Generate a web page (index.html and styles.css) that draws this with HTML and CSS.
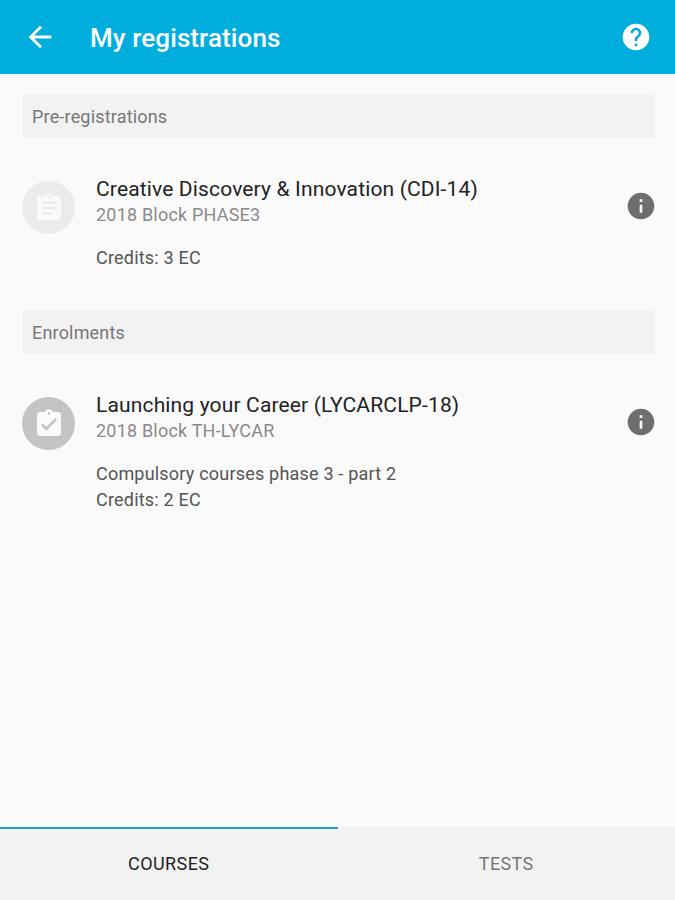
FILE: index.html
```html
<!DOCTYPE html>
<html>
<head>
  <title>My registrations</title>
  <link rel="stylesheet" href="styles.css">
</head>
<body>
  <div class="app">
    <header class="toolbar">
      <svg class="back-icon" viewBox="0 0 24 24"><path d="M20 11H7.83l5.59-5.59L12 4l-8 8 8 8 1.41-1.41L7.83 13H20v-2z"/></svg>
      <h1 class="toolbar-title">My registrations</h1>
      <svg class="help-icon" viewBox="0 0 24 24"><path d="M12 2C6.48 2 2 6.48 2 12s4.48 10 10 10 10-4.48 10-10S17.52 2 12 2zm1 17h-2v-2h2v2zm2.07-7.75l-.9.92C13.45 12.9 13 13.5 13 15h-2v-.5c0-1.1.45-2.1 1.17-2.83l1.24-1.26c.37-.36.59-.86.59-1.41 0-1.1-.9-2-2-2s-2 .9-2 2H8c0-2.21 1.79-4 4-4s4 1.79 4 4c0 .88-.36 1.68-.93 2.25z"/></svg>
    </header>

    <main class="content">
      <section class="group">
        <h2 class="group-title">Pre-registrations</h2>
        <div class="course">
          <div class="badge badge-pending">
            <svg viewBox="0 0 24 24"><path d="M19 3h-4.18C14.4 1.84 13.3 1 12 1s-2.4.84-2.82 2H5c-1.1 0-2 .9-2 2v14c0 1.1.9 2 2 2h14c1.1 0 2-.9 2-2V5c0-1.1-.9-2-2-2zm-7 0c.55 0 1 .45 1 1s-.45 1-1 1-1-.45-1-1 .45-1 1-1zm2 14H7v-2h7v2zm3-4H7v-2h10v2zm0-4H7V7h10v2z"/></svg>
          </div>
          <div class="course-body">
            <div class="course-name">Creative Discovery &amp; Innovation (CDI-14)</div>
            <div class="course-block">2018 Block PHASE3</div>
            <div class="course-info">Credits: 3 EC</div>
          </div>
          <svg class="info-icon" viewBox="0 0 24 24"><path d="M12 2C6.48 2 2 6.48 2 12s4.48 10 10 10 10-4.48 10-10S17.52 2 12 2zm1 15h-2v-6h2v6zm0-8h-2V7h2v2z"/></svg>
        </div>
      </section>

      <section class="group">
        <h2 class="group-title">Enrolments</h2>
        <div class="course">
          <div class="badge badge-enrolled">
            <svg viewBox="0 0 24 24"><path d="M19 3h-4.18C14.4 1.84 13.3 1 12 1s-2.4.84-2.82 2H5c-1.1 0-2 .9-2 2v14c0 1.1.9 2 2 2h14c1.1 0 2-.9 2-2V5c0-1.1-.9-2-2-2zm-7 0c.55 0 1 .45 1 1s-.45 1-1 1-1-.45-1-1 .45-1 1-1zm-2 14l-4-4 1.41-1.41L10 14.17l6.59-6.59L18 9l-8 8z"/></svg>
          </div>
          <div class="course-body">
            <div class="course-name">Launching your Career (LYCARCLP-18)</div>
            <div class="course-block">2018 Block TH-LYCAR</div>
            <div class="course-info">Compulsory courses phase 3 - part 2<br>Credits: 2 EC</div>
          </div>
          <svg class="info-icon" viewBox="0 0 24 24"><path d="M12 2C6.48 2 2 6.48 2 12s4.48 10 10 10 10-4.48 10-10S17.52 2 12 2zm1 15h-2v-6h2v6zm0-8h-2V7h2v2z"/></svg>
        </div>
      </section>
    </main>

    <nav class="tabs">
      <div class="tab tab-active">COURSES</div>
      <div class="tab">TESTS</div>
    </nav>
  </div>
</body>
</html>
```

FILE: styles.css
```css
body {
  margin: 0;
  font-family: Roboto, "Liberation Sans", sans-serif;
  background-color: #fafafa;
}

.app {
  display: flex;
  flex-direction: column;
  height: 900px;
}

.toolbar {
  display: flex;
  align-items: center;
  height: 74px;
  padding: 0 23px 0 23px;
  background-color: #00aede;
  color: #fff;
}

.back-icon {
  width: 34px;
  height: 34px;
  fill: #fff;
}

.toolbar-title {
  flex: 1;
  margin: 2px 0 0 33px;
  font-size: 26px;
  font-weight: 500;
  letter-spacing: 0.1px;
}

.help-icon {
  width: 32px;
  height: 32px;
  fill: #fff;
}

.content {
  flex: 1;
  padding: 21px 20px 0 22px;
}

.group {
  margin-bottom: 40px;
}

.group-title {
  margin: 0;
  height: 43px;
  padding-left: 10px;
  background-color: #f2f2f2;
  color: #777;
  font-size: 18px;
  font-weight: 400;
  letter-spacing: 0.18px;
  line-height: 43px;
}

.course {
  display: flex;
  align-items: flex-start;
  padding-top: 38px;
}

.badge {
  display: flex;
  align-items: center;
  justify-content: center;
  width: 53px;
  height: 53px;
  margin-top: 5px;
  border-radius: 50%;
}

.badge svg {
  width: 32px;
  height: 32px;
  fill: #fafafa;
}

.badge-pending {
  background-color: #ebebeb;
}

.badge-enrolled {
  background-color: #c4c4c4;
}

.course-body {
  flex: 1;
  margin-left: 21px;
}

.course-name {
  color: #222;
  font-size: 21px;
  letter-spacing: 0.15px;
  line-height: 26px;
}

.course-block {
  color: #8a8a8a;
  font-size: 18px;
  letter-spacing: 0.2px;
  line-height: 26px;
}

.course-info {
  margin-top: 17px;
  color: #555;
  font-size: 18px;
  letter-spacing: 0.2px;
  line-height: 26px;
}

.info-icon {
  width: 32px;
  height: 32px;
  margin-top: 14px;
  margin-right: -2px;
  fill: #6e6e6e;
}

.tabs {
  display: flex;
  height: 73px;
  background-color: #f2f2f2;
}

.tab {
  flex: 1;
  height: 71px;
  color: #777;
  border-top: 2px solid transparent;
  font-size: 18px;
  letter-spacing: 0.4px;
  line-height: 70px;
  text-align: center;
}

.tab-active {
  color: #222;
  border-top-color: #1ba0c8;
}
```
